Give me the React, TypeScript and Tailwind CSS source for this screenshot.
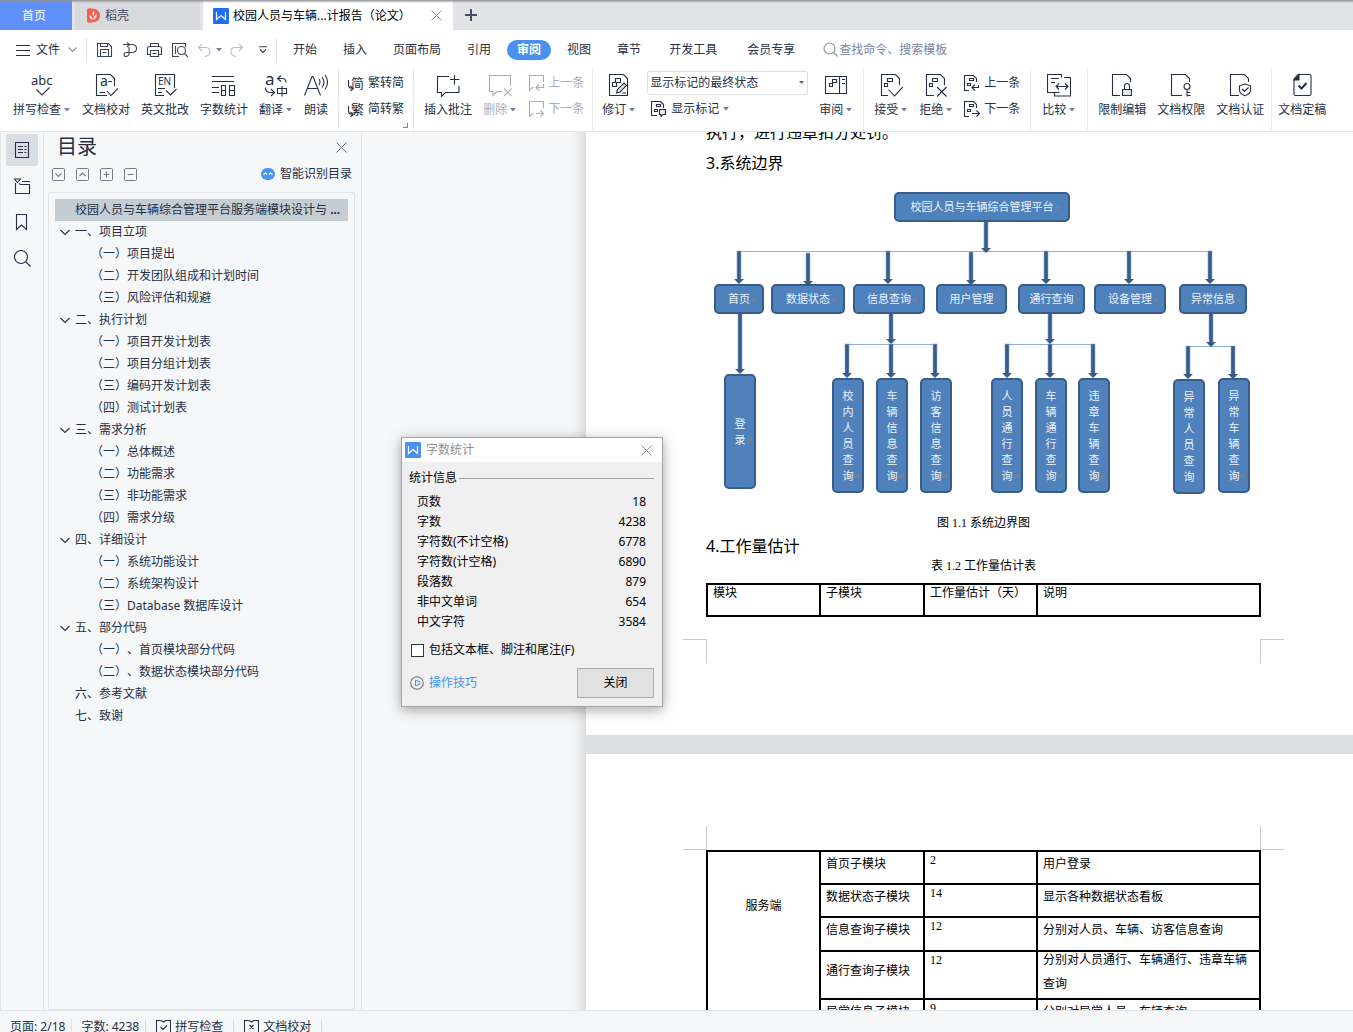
import type { ReactNode } from "react";
import clsx from "clsx";

type IconProps = {
  size?: number;
  box?: number;
  className?: string;
  children: ReactNode;
};

const Icon = ({ size = 24, box = size, className, children }: IconProps) => (
  <svg
    width={size}
    height={size}
    viewBox={`0 0 ${box} ${box}`}
    fill="none"
    stroke="currentColor"
    strokeWidth="1.1"
    className={clsx("shrink-0", className)}
    aria-hidden="true"
  >
    {children}
  </svg>
);

const Glyph = ({ x, y, size, children }: { x: number; y: number; size: number; children: string }) => (
  <text x={x} y={y} fontSize={size} fill="currentColor" stroke="none">
    {children}
  </text>
);

const Caret = () => (
  <svg width="7" height="4" viewBox="0 0 7 4" className="shrink-0" aria-hidden="true">
    <path d="M0 0h6L3 3.5z" fill="#74809b" />
  </svg>
);

const WLogo = ({ className }: { className?: string }) => (
  <svg width="16" height="16" viewBox="0 0 16 16" className={clsx("shrink-0", className)} aria-hidden="true">
    <rect width="16" height="16" rx="1" fill="currentColor" />
    <path d="M3.5 4v7.5L8 7.5l4.5 4V4" fill="none" stroke="#fff" strokeWidth="1.2" />
  </svg>
);

const Close = ({ size = 11 }: { size?: number }) => (
  <Icon size={size} box={11}>
    <path d="M.5.5l10 10M10.5.5l-10 10" strokeWidth="1" />
  </Icon>
);

const icons = {
  spell: (
    <Icon>
      <Glyph x={1} y={12} size={13}>abc</Glyph>
      <path d="M6.5 16.5l5.5 5.5 7.500-7.500" />
    </Icon>
  ),
  proof: (
    <Icon>
      <path d="M13 22.5H2.5v-21h14l4 4V13M5.500 19.5h5.500M13 18l4 4.500 7-7" />
      <Glyph x={6} y={13} size={14}>a-</Glyph>
    </Icon>
  ),
  english: (
    <Icon>
      <path d="M11 22.5H2.5v-21h19V15M5 15.5h7M5 19.5h4M13 17.500l4.500 4.500 6-6" />
      <Glyph x={5} y={12} size={10}>EN</Glyph>
    </Icon>
  ),
  count: (
    <Icon>
      <path d="M0 3.5h22M0 8.5h22M0 14.5h7M0 19.5h7M9.5 12.5h4v10h-4zM9.5 17.5h4M17.5 12.5h5v10h-5zM17.5 17.5h5" />
    </Icon>
  ),
  translate: (
    <Icon>
      <Glyph x={1} y={12} size={17}>a</Glyph>
      <path d="M17 2.500l-3.500 3 3.500 3M14 5.500h4.500q3.500 0 3.500 4M1.500 14.500q0 5 5 5h3.500M7 16l3.500 3.500L7 23M13.5 15.5h9v5h-9zM18 13v10.500" />
    </Icon>
  ),
  read: (
    <Icon>
      <path d="M.5 22.500L8 3.500h1l7.500 19M3.5 15.5h10M15 6q2 3 0 6M18 4q4 5.500 0 10.500M21 2q5 7 0 14.500" />
    </Icon>
  ),
  comment: (
    <Icon>
      <path d="M13 3.5H1.500v16H5.500v4l4-4h13.500V13M14 6.500h9.500M18.5 2v9.500" />
    </Icon>
  ),
  removeComment: (
    <Icon>
      <path d="M14 18.5H9l-4 4v-4H1.500v-16h21V13M16 15.500l7.500 7.500M23.500 15.500L16 23" />
    </Icon>
  ),
  revise: (
    <Icon>
      <path d="M2.5 1.5h14l4 4v17h-18zM6.500 9.500h7v-4H8.500v4M5.500 9.500h4v4h-4z" />
      <path d="M9.500 20l1-3.500 6.500-6.500 2.500 2.500-6.500 6.500z" fill="#e4e6e9" />
      <path d="M15.500 20h3.500" />
    </Icon>
  ),
  reviewPane: (
    <Icon>
      <path d="M1.5 3.5h21v17h-21zM15.5 3.5v17M8.5 6.5h4v3h-4zM5.5 10.5h3v3h-3zM18 6.500h3M18 10.500h3" />
    </Icon>
  ),
  accept: (
    <Icon>
      <path d="M9 22.5H2.5v-21h14l4 4V12M8.5 5.5h5v3h-5zM5.5 10.5h3v3h-3zM9.500 16.500l6 6.500 8.500-9" />
    </Icon>
  ),
  reject: (
    <Icon>
      <path d="M10 22.5H2.5v-21h14l4 4V12M8.5 5.5h5v3h-5zM5.5 10.5h3v3h-3zM13 14l9.500 9.500M22.500 14L13 23.500" />
    </Icon>
  ),
  compare: (
    <Icon>
      <path d="M14.500 4.500v-3H.5v18h12M7.500 19.500v3.500h16V4.500H17M4 5.500h8M4 9.500h4M9 13.500h12M12 10.500l-3 3 3 3M18 10.500l3 3-3 3" />
    </Icon>
  ),
  lock: (
    <Icon>
      <path d="M10 22.5H2.5v-21h14l4 4V9" />
      <path d="M12.5 16.5h9v6h-9z" fill="#e4e6e9" />
      <path d="M14.5 16v-3q0-2.500 2.500-2.500t2.500 2.500v3" />
    </Icon>
  ),
  key: (
    <Icon>
      <path d="M13 22.5H2.5v-21h14l4 4V9M18 17v6.500M18 22.5h3.500M18 19.5h3" />
      <circle cx="18" cy="13.500" r="3" />
    </Icon>
  ),
  shield: (
    <Icon>
      <path d="M11 22.5H2.5v-21h14l4 4V9M17 11l5.500 1.800v4.500q0 3.500-5.500 5.500-5.500-2-5.500-5.500v-4.500zM14 16l2.500 2.500 4-4" />
    </Icon>
  ),
  final: (
    <Icon>
      <path d="M8 1.500h11.500q1.500 0 1.500 1.500v18q0 1.500-1.500 1.500h-14q-1.500 0-1.500-1.500V6z" />
      <path d="M4 7l5-5.500V7z" fill="currentColor" />
      <path d="M8.500 12.500l3 3 5-5.500" strokeWidth="2" />
    </Icon>
  ),
  toSimplified: (
    <Icon size={16}>
      <Glyph x={3} y={13} size={13}>简</Glyph>
      <path d="M.5 5v5q0 3 3 3.500M2.500 11l2.500 2.500L2.500 16" />
    </Icon>
  ),
  toTraditional: (
    <Icon size={16}>
      <Glyph x={3} y={13} size={13}>繁</Glyph>
      <path d="M.5 5v5q0 3 3 3.500M2.500 11l2.500 2.500L2.500 16" />
    </Icon>
  ),
  prevComment: (
    <Icon size={16}>
      <path d="M5.500 12.500H4.500l-3 3V.5h14V7M15.500 9v3.500H8M11 9.500l-3 3 3 3" />
    </Icon>
  ),
  nextComment: (
    <Icon size={16}>
      <path d="M5.500 12.500H4.500l-3 3V.5h14V7M8 12.500h7.500M12.500 9.500l3 3-3 3" />
    </Icon>
  ),
  prevChange: (
    <Icon size={16}>
      <path d="M5 15.500H.500V.5h9l3 3V7M5.500 3.500h4v2h-4zM3.500 8.500h3v2h-3zM8 12.500h6.500V10M11 9.500l-3 3 3 3" />
    </Icon>
  ),
  nextChange: (
    <Icon size={16}>
      <path d="M5 15.500H.500V.5h9l3 3V7M5.500 3.500h4v2h-4zM3.500 8.500h3v2h-3zM8 12.500h7M12.500 9.500l3 3-3 3" />
    </Icon>
  ),
  showMarks: (
    <Icon size={16}>
      <path d="M6 14.500H.500V.5h9l3 3V7M5.500 3.500h4v2h-4zM3.500 8.500h3v2h-3z" />
      <path d="M8.500 8.500h6v5H12l-2 2v-2H8.500z" fill="#e4e6e9" />
    </Icon>
  ),
};

type ButtonProps = {
  icon: ReactNode;
  label: string;
  caret?: boolean;
  disabled?: boolean;
};

const BigButton = ({ icon, label, caret, disabled }: ButtonProps) => (
  <button
    type="button"
    disabled={disabled}
    className="flex shrink-0 flex-col items-center gap-[5px] pt-[5px] disabled:text-[#a9adb5]"
  >
    {icon}
    <span className="flex items-center gap-[3px] whitespace-nowrap">
      {label}
      {caret && <Caret />}
    </span>
  </button>
);

const SmallButton = ({ icon, label, caret, disabled }: ButtonProps) => (
  <button
    type="button"
    disabled={disabled}
    className="flex h-4 items-center gap-1 whitespace-nowrap disabled:text-[#a9adb5]"
  >
    {icon}
    {label}
    {caret && <Caret />}
  </button>
);

const Group = ({ className, children }: { className: string; children: ReactNode }) => (
  <div className={clsx("relative flex h-[62px] shrink-0 items-start gap-[11px] border-[#e9ebee]", className)}>
    {children}
  </div>
);

const Pair = ({ children }: { children: ReactNode }) => (
  <div className="flex flex-col gap-[10px] pt-[7px]">{children}</div>
);

const TabBar = () => (
  <div className="relative flex h-[30px] shrink-0 items-stretch bg-[#e1e3e7]">
    <button type="button" className="w-[72px] bg-[#5f8ff8] pt-[1px] pr-1 text-white">
      首页
    </button>
    <button
      type="button"
      className="ml-[3px] flex w-[125px] items-center gap-[5px] bg-[#d8dade] pt-[1px] pl-3 text-[#3f4a63]"
    >
      <svg width="13" height="15" viewBox="0 0 13 15" aria-hidden="true">
        <path d="M0 2q0-2 2-1.800L8 1q5 1.500 5 6.500T8 14l-6 .800Q0 15 0 13z" fill="#f5604d" />
        <path
          d="M6 13V8M6 12Q2 11 2.500 7 5 8 6 12 10 10 10 6 7 7 6 12M6 8Q4.500 5 6.500 3 8 5 7 7"
          fill="#fff"
          fillOpacity=".8"
        />
      </svg>
      稻壳
    </button>
    <div className="ml-[3px] flex w-[250px] items-center bg-white pt-[1px] pr-[11px] pl-[10px] text-black">
      <WLogo className="text-[#1f6ff0]" />
      <span className="ml-1 whitespace-nowrap">校园人员与车辆...计报告（论文）</span>
      <button type="button" aria-label="关闭标签" className="ml-auto text-[#8290ad]">
        <Close />
      </button>
    </div>
    <button type="button" aria-label="新建" className="ml-3 text-[#44506b]">
      <Icon size={12}>
        <path d="M0 6h12M6 0v12" strokeWidth="2" />
      </Icon>
    </button>
    <div className="absolute inset-x-0 top-0 h-[3px] bg-linear-to-b from-[#8f9092] to-transparent" />
  </div>
);

const mainTabs = ["开始", "插入", "页面布局", "引用", "审阅", "视图", "章节"];
const extraTabs = ["开发工具", "会员专享"];

const QuickTools = () => (
  <div className="flex shrink-0 items-center text-[#3a4256]">
    <button type="button" aria-label="保存">
      <Icon size={16}>
        <path d="M.5 1.500h11l3 3v10h-14zM3.500 1.500v3h7v-3M3.500 14.500v-7h8v7M5.500 10.500h4" />
      </Icon>
    </button>
    <button type="button" aria-label="输出" className="ml-[9px]">
      <Icon size={16}>
        <path d="M1 2.500h6M5 .5l2.500 2L5 5M8 2.500h2q4.500 0 4.500 4t-4.500 4H4.500q-2.500 0-2.500 2t2 2 3-2V5" />
      </Icon>
    </button>
    <button type="button" aria-label="打印" className="ml-[9px]">
      <Icon size={16}>
        <path d="M3.500 4.500v-3h8v3M3 12.500H.5v-6q0-2 2-2h10q2 0 2 2v6H12M3.500 8.500h8v6h-8zM5.500 11.500h4" />
      </Icon>
    </button>
    <button type="button" aria-label="打印预览" className="ml-[9px]">
      <Icon size={16}>
        <path d="M13.500 5V1.500H.5v13H7M3.500 4v8" />
        <circle cx="9.500" cy="8.500" r="4" />
        <path d="M12.500 11.500l3.500 3.500" />
      </Icon>
    </button>
    <button type="button" aria-label="撤销" className="ml-[9px] flex items-center gap-[3px] text-[#b9bec8]">
      <Icon size={16}>
        <path d="M5 2L1.500 5.500 5 9M2 5.500h7q4 0 4 4t-5 5" />
      </Icon>
      <Caret />
    </button>
    <button type="button" aria-label="恢复" className="ml-[6px] text-[#b9bec8]">
      <Icon size={16}>
        <path d="M10 2l3.500 3.500L10 9M13 5.500H6q-4 0-4 4t5 5" />
      </Icon>
    </button>
    <button type="button" aria-label="更多" className="ml-[14px]">
      <Icon size={8}>
        <path d="M0 .8h8M1 3.500l3 3 3-3" />
      </Icon>
    </button>
  </div>
);

const MenuRow = () => (
  <div className="flex h-9 shrink-0 items-center pt-[3px] pl-4">
    <button type="button" className="flex items-center">
      <Icon size={14}>
        <path d="M0 2.500h14M0 7.500h14M0 12.500h14" />
      </Icon>
      <span className="ml-[6px]">文件</span>
      <Icon size={9} className="ml-2 text-[#8b93a3]">
        <path d="M.5 2.500l4 4 4-4" />
      </Icon>
    </button>
    <span className="mr-[10px] ml-[9px] h-6 w-px bg-[#dfe1e5]" />
    <QuickTools />
    <span className="mr-[6px] ml-[9px] h-6 w-px bg-[#dfe1e5]" />
    <nav className="flex shrink-0 items-center gap-[18px] whitespace-nowrap">
      <div className="flex gap-[6px]">
        {mainTabs.map((tab) => (
          <button
            key={tab}
            type="button"
            className={clsx(
              "h-5 rounded-full px-[10px]",
              tab === "审阅" && "bg-[#4a90ee] font-bold text-white"
            )}
          >
            {tab}
          </button>
        ))}
      </div>
      <div className="flex gap-[30px]">
        {extraTabs.map((tab) => (
          <button key={tab} type="button">
            {tab}
          </button>
        ))}
      </div>
    </nav>
    <label className="ml-[28px] flex items-center gap-[1px] text-[#8592ad]">
      <Icon size={15}>
        <circle cx="6.500" cy="6.500" r="5.500" />
        <path d="M10.500 10.500l4 4" />
      </Icon>
      <input
        type="search"
        aria-label="查找命令、搜索模板"
        placeholder="查找命令、搜索模板"
        className="w-40 bg-transparent outline-none placeholder:text-[#7785a3]"
      />
    </label>
  </div>
);

const Ribbon = () => (
  <div className="relative z-10 flex h-[66px] shrink-0 overflow-hidden border-b border-[#e3e5e8] bg-white pt-[2px]">
    <Group className="border-r pr-[10px] pl-[13px]">
      <BigButton icon={icons.spell} label="拼写检查" caret />
      <BigButton icon={icons.proof} label="文档校对" />
      <BigButton icon={icons.english} label="英文批改" />
      <BigButton icon={icons.count} label="字数统计" />
      <BigButton icon={icons.translate} label="翻译" caret />
      <BigButton icon={icons.read} label="朗读" />
    </Group>
    <Group className="border-r px-[9px]">
      <Pair>
        <SmallButton icon={icons.toSimplified} label="繁转简" />
        <SmallButton icon={icons.toTraditional} label="简转繁" />
      </Pair>
      <button
        type="button"
        aria-label="更多选项"
        className="absolute right-[5px] bottom-[2px] size-[5px] border-r border-b border-[#7d879b]"
      />
    </Group>
    <Group className="border-r pr-2 pl-[10px]">
      <BigButton icon={icons.comment} label="插入批注" />
      <BigButton icon={icons.removeComment} label="删除" caret disabled />
      <Pair>
        <SmallButton icon={icons.prevComment} label="上一条" disabled />
        <SmallButton icon={icons.nextComment} label="下一条" disabled />
      </Pair>
    </Group>
    <Group className="border-r pr-[10px] pl-[9px]">
      <BigButton icon={icons.revise} label="修订" caret />
      <div className="flex flex-col gap-[6px] pt-[3px]">
        <div className="relative">
          <select
            aria-label="标记状态"
            className="h-6 w-[161px] appearance-none rounded-[2px] border border-[#dcdfe4] bg-white pl-[2px] outline-none"
          >
            <option>显示标记的最终状态</option>
          </select>
          <span className="pointer-events-none absolute top-[10px] right-1">
            <svg width="5" height="3" viewBox="0 0 5 3" className="block">
              <path d="M0 0h5L2.500 3z" fill="#5b6780" />
            </svg>
          </span>
        </div>
        <div className="flex pl-1">
          <SmallButton icon={icons.showMarks} label="显示标记" caret />
        </div>
      </div>
      <BigButton icon={icons.reviewPane} label="审阅" caret />
    </Group>
    <Group className="border-r px-[10px]">
      <BigButton icon={icons.accept} label="接受" caret />
      <BigButton icon={icons.reject} label="拒绝" caret />
      <Pair>
        <SmallButton icon={icons.prevChange} label="上一条" />
        <SmallButton icon={icons.nextChange} label="下一条" />
      </Pair>
    </Group>
    <Group className="border-r px-[11px]">
      <BigButton icon={icons.compare} label="比较" caret />
    </Group>
    <Group className="border-r pr-[7px] pl-[10px]">
      <BigButton icon={icons.lock} label="限制编辑" />
      <BigButton icon={icons.key} label="文档权限" />
      <BigButton icon={icons.shield} label="文档认证" />
    </Group>
    <Group className="pl-[6px]">
      <BigButton icon={icons.final} label="文档定稿" />
    </Group>
  </div>
);

const railItems = [
  {
    name: "目录",
    icon: <path d="M1.500.5h13v15h-13zM4 4.500h5M10.500 4.500h2M4 7.500h5M10.500 7.500h2M4 10.500h5M10.500 10.500h2" />,
  },
  {
    name: "章节",
    icon: <path d="M.5 1h6l-3 3.500zM1.500 5v10.500h14v-9h-9l-1.500-1M8 3.500h8" />,
  },
  { name: "书签", icon: <path d="M2.500.5h10v15l-5-4.500-5 4.500z" /> },
  {
    name: "查找",
    icon: <path d="M11.500 11.500l5 5M13.500 7a6.500 6.500 0 1 1-13 0 6.500 6.500 0 0 1 13 0z" />,
  },
];

const Rail = () => (
  <div className="flex w-11 shrink-0 flex-col items-center gap-1 border-x border-[#e1e4e9] pt-[2px]">
    {railItems.map((item, i) => (
      <button
        key={item.name}
        type="button"
        aria-label={item.name}
        className={clsx("flex size-8 items-center justify-center rounded-[2px]", i === 0 && "bg-[#d9dde4]")}
      >
        <Icon size={17}>{item.icon}</Icon>
      </button>
    ))}
  </div>
);

const outline = [
  { title: "一、项目立项", children: ["（一）项目提出", "（二）开发团队组成和计划时间", "（三）风险评估和规避"] },
  {
    title: "二、执行计划",
    children: ["（一）项目开发计划表", "（二）项目分组计划表", "（三）编码开发计划表", "（四）测试计划表"],
  },
  {
    title: "三、需求分析",
    children: ["（一）总体概述", "（二）功能需求", "（三）非功能需求", "（四）需求分级"],
  },
  {
    title: "四、详细设计",
    children: ["（一）系统功能设计", "（二）系统架构设计", "（三）Database 数据库设计"],
  },
  { title: "五、部分代码", children: ["（一）、首页模块部分代码", "（二）、数据状态模块部分代码"] },
  { title: "六、参考文献", children: [] },
  { title: "七、致谢", children: [] },
];

const outlineTools = [
  { name: "展开", d: "M3.500 5.500l3 3 3-3" },
  { name: "收起", d: "M3.500 8l3-3 3 3" },
  { name: "增加", d: "M3.500 6.500h6M6.500 3.500v6" },
  { name: "减少", d: "M3.500 6.500h6" },
];

const Outline = () => (
  <aside className="flex w-[318px] shrink-0 flex-col border-r border-[#e1e4e9] pr-[6px] pl-1">
    <div className="flex h-[30px] items-center justify-between pr-2 pl-[9px]">
      <h2 className="text-xl leading-7">目录</h2>
      <button type="button" aria-label="关闭目录" className="text-[#6a7387]">
        <Close />
      </button>
    </div>
    <div className="flex h-6 items-center gap-[11px] pr-[3px] pl-1">
      {outlineTools.map((tool) => (
        <button key={tool.name} type="button" aria-label={tool.name} className="text-[#757b88]">
          <Icon size={13}>
            <rect x=".5" y=".5" width="12" height="12" rx="1" strokeWidth="1" />
            <path d={tool.d} />
          </Icon>
        </button>
      ))}
      <button type="button" className="ml-auto flex items-center gap-[5px]">
        <svg width="14" height="12" viewBox="0 0 14 12" aria-hidden="true">
          <rect width="14" height="12" rx="6" fill="#4a97f2" />
          <path d="M2.500 6.500l2-1.500 1.500 1.500M8 6.500L9.500 5l2 1.500" fill="none" stroke="#fff" strokeWidth="1.300" />
        </svg>
        智能识别目录
      </button>
    </div>
    <div className="mt-[6px] min-h-0 flex-1 overflow-hidden rounded-[2px] border border-[#e0e3e8] px-[6px] py-[6px] leading-[22px] whitespace-nowrap">
      <a href="#top" className="block bg-[#c5cdd4] pl-5">
        校园人员与车辆综合管理平台服务端模块设计与 <b>...</b>
      </a>
      <ul>
        {outline.map((section) => (
          <li key={section.title}>
            <a href="#top" className="flex items-center pl-[5px]">
              <span className="w-[15px]">
                {section.children.length > 0 && (
                  <Icon size={10}>
                    <path d="M.5 3l4.500 4.500L9.500 3" />
                  </Icon>
                )}
              </span>
              {section.title}
            </a>
            {section.children.map((child) => (
              <a key={child} href="#top" className="block pl-9">
                {child}
              </a>
            ))}
          </li>
        ))}
      </ul>
    </div>
  </aside>
);

type Node = { x: number; y: number; w: number; h: number; label: string; vertical?: boolean };

const nodes: Node[] = [
  { x: 189, y: 14, w: 174, h: 28, label: "校园人员与车辆综合管理平台" },
  { x: 9, y: 106, w: 48, h: 28, label: "首页" },
  { x: 66, y: 106, w: 72, h: 28, label: "数据状态" },
  { x: 148, y: 106, w: 70, h: 28, label: "信息查询" },
  { x: 231, y: 106, w: 69, h: 28, label: "用户管理" },
  { x: 313, y: 106, w: 65, h: 28, label: "通行查询" },
  { x: 389, y: 106, w: 70, h: 28, label: "设备管理" },
  { x: 474, y: 106, w: 66, h: 28, label: "异常信息" },
  { x: 19, y: 196, w: 30, h: 113, label: "登录", vertical: true },
  { x: 127, y: 200, w: 30, h: 113, label: "校内人员查询", vertical: true },
  { x: 171, y: 200, w: 30, h: 113, label: "车辆信息查询", vertical: true },
  { x: 215, y: 200, w: 30, h: 113, label: "访客信息查询", vertical: true },
  { x: 286, y: 200, w: 30, h: 113, label: "人员通行查询", vertical: true },
  { x: 330, y: 200, w: 30, h: 113, label: "车辆通行查询", vertical: true },
  { x: 373, y: 200, w: 30, h: 113, label: "违章车辆查询", vertical: true },
  { x: 468, y: 201, w: 30, h: 113, label: "异常人员查询", vertical: true },
  { x: 513, y: 200, w: 30, h: 113, label: "异常车辆查询", vertical: true },
];

// [x, from y, to y]
const arrows = [
  [280, 42, 74],
  [33, 72, 105],
  [102, 74, 107],
  [182, 72, 105],
  [265, 73, 106],
  [340, 72, 105],
  [423, 72, 105],
  [504, 72, 105],
  [34, 134, 195],
  [185, 134, 165],
  [141, 165, 199],
  [185, 165, 199],
  [229, 165, 199],
  [344, 134, 165],
  [301, 165, 199],
  [344, 165, 199],
  [387, 165, 199],
  [505, 134, 168],
  [482, 167, 200],
  [527, 167, 200],
];

// [from x, to x, y]
const rails = [
  [31, 506, 72],
  [139, 231, 165],
  [299, 389, 165],
  [480, 529, 167],
];

const Diagram = () => (
  <svg width="555" height="332" viewBox="0 0 555 332" className="block" fontSize="11" fill="#eaf1f9" textAnchor="middle">
    {rails.map(([x1, x2, y]) => (
      <path key={`${x1}-${y}`} d={`M${x1} ${y + 0.5}H${x2}`} stroke="#8fb0d6" />
    ))}
    {arrows.map(([x, y1, y2]) => (
      <g key={`${x}-${y1}`} fill="#385d8a">
        <rect x={x - 2} y={y1} width="4" height={y2 - y1 - 2} stroke="#8aa5c6" strokeWidth=".6" />
        <path d={`M${x - 5} ${y2 - 5}h10l-5 5z`} />
      </g>
    ))}
    {nodes.map(({ x, y, w, h, label, vertical }) => {
      const chars = vertical ? label.split("") : [label];
      const cx = x + w / 2;
      const first = y + h / 2 + 4 - (chars.length - 1) * 8;
      const endX = cx + (vertical ? 6 : label.length * 5.5 + 1);
      const endY = first + (chars.length - 1) * 16 - 3;
      return (
        <g key={label}>
          <rect x={x} y={y} width={w} height={h} rx="4" fill="#4f81bd" stroke="#385d8a" strokeWidth="2" />
          <text>
            {chars.map((char, i) => (
              <tspan key={i} x={cx} y={first + i * 16}>
                {char}
              </tspan>
            ))}
          </text>
          <path d={`M${endX + 5} ${endY - 3}v3h-4m2 -2l-2 2 2 2`} fill="none" stroke="#8c8578" strokeWidth=".8" />
        </g>
      );
    })}
  </svg>
);

const CropMarks = ({ side }: { side: "top" | "bottom" }) => (
  <div className="-mx-[23px] flex justify-between">
    <span className={clsx("size-6 border-r border-[#c9c9c9]", side === "top" ? "border-b" : "border-t")} />
    <span className={clsx("size-6 border-l border-[#c9c9c9]", side === "top" ? "border-b" : "border-t")} />
  </div>
);

const Num = ({ children }: { children: ReactNode }) => (
  <span className="font-['Liberation_Serif',serif] leading-none">{children}</span>
);

const Columns = () => (
  <colgroup>
    <col className="w-[113px]" />
    <col className="w-[104px]" />
    <col className="w-[113px]" />
    <col />
  </colgroup>
);

const workload = [
  { name: "首页子模块", days: 2, note: "用户登录", row: "h-[33px]" },
  { name: "数据状态子模块", days: 14, note: "显示各种数据状态看板", row: "h-[33px]" },
  { name: "信息查询子模块", days: 12, note: "分别对人员、车辆、访客信息查询", row: "h-[34px]" },
  { name: "通行查询子模块", days: 12, note: "分别对人员通行、车辆通行、违章车辆查询", row: "h-12", tall: true },
  { name: "异常信息子模块", days: 9, note: "分别对异常人员、车辆查询", row: "h-[33px]" },
];

const cell = "border-2 border-black px-[5px] py-0 text-left font-normal";

const Document = () => (
  <main className="min-w-0 flex-1 overflow-hidden pl-[224px] text-black">
    <div className="-mt-[15px] w-[795px] bg-[#dddfe2] shadow-[0_0_16px_rgba(0,0,0,0.22)]">
      <section className="bg-white px-[120px] pb-[72px]">
        <p className="text-base leading-[31px]">执行，进行违章扣分处罚。</p>
        <h3 className="text-base leading-[31px]">3.系统边界</h3>
        <Diagram />
        <p className="h-6 text-center leading-6">
          图<Num> 1.1 </Num>系统边界图
        </p>
        <h3 className="h-[23px] text-base leading-[23px]">4.工作量估计</h3>
        <p className="h-4 text-center leading-4">
          表<Num> 1.2 </Num>工作量估计表
        </p>
        <table className="mt-[9px] mb-[22px] w-full table-fixed border-collapse leading-4">
          <Columns />
          <thead>
            <tr className="h-8 align-top">
              <th className={cell}>模块</th>
              <th className={cell}>子模块</th>
              <th className={clsx(cell, "whitespace-nowrap")}>工作量估计（天）</th>
              <th className={cell}>说明</th>
            </tr>
          </thead>
        </table>
        <CropMarks side="bottom" />
      </section>
      <section className="mt-[19px] bg-white px-[120px] pt-[72px]">
        <CropMarks side="top" />
        <table className="w-full table-fixed border-collapse leading-6">
          <Columns />
          <tbody>
            {workload.map((item, i) => (
              <tr key={item.name} className={clsx("align-top", item.row)}>
                {i === 0 && (
                  <td rowSpan={workload.length} className={clsx(cell, "pt-[42px]")}>
                    <p className="text-center">服务端</p>
                  </td>
                )}
                <td className={clsx(cell, item.tall && "pb-2 align-middle")}>{item.name}</td>
                <td className={cell}>
                  <p className="h-4 leading-4">
                    <Num>{item.days}</Num>
                  </p>
                </td>
                <td className={cell}>
                  <p className={clsx(item.tall && "-my-1")}>{item.note}</p>
                </td>
              </tr>
            ))}
          </tbody>
        </table>
      </section>
    </div>
  </main>
);

const stats = [
  ["页数", 18],
  ["字数", 4238],
  ["字符数(不计空格)", 6778],
  ["字符数(计空格)", 6890],
  ["段落数", 879],
  ["非中文单词", 654],
  ["中文字符", 3584],
];

const CountDialog = () => (
  <div
    role="dialog"
    aria-label="字数统计"
    className="absolute top-[437px] left-[401px] z-20 w-[262px] border border-[#a3a3a3] bg-[#f0f0f0] pb-2 text-black shadow-[0_3px_12px_rgba(0,0,0,0.35)]"
  >
    <div className="flex h-6 items-center bg-white pr-[10px] pl-[3px] text-[#8f8f8f]">
      <WLogo className="text-[#4a90f0]" />
      <span className="ml-[5px]">字数统计</span>
      <button type="button" aria-label="关闭窗口" className="ml-auto">
        <Close />
      </button>
    </div>
    <div className="pt-2 pr-2 pl-[7px]">
      <div className="flex items-center gap-[2px]">
        统计信息
        <span className="h-px flex-1 bg-[#a0a0a0]" />
      </div>
      <dl className="mt-[6px] px-2 leading-5">
        {stats.map(([label, value]) => (
          <div key={label} className="flex justify-between">
            <dt>{label}</dt>
            <dd>{value}</dd>
          </div>
        ))}
      </dl>
      <label className="mt-[10px] flex items-center gap-[5px] pl-[2px]">
        <input type="checkbox" className="size-[13px] appearance-none border border-[#333] bg-white" />
        包括文本框、脚注和尾注(F)
      </label>
      <div className="mt-[10px] flex items-center justify-between">
        <a href="#top" className="flex items-center gap-[5px] pl-[1px] text-[#4a90f0]">
          <Icon size={14}>
            <circle cx="7" cy="7" r="6.300" stroke="#6f7684" />
            <path d="M5.500 4.500v5q4.500-.500 4.500-2.500T5.500 4.500z" />
          </Icon>
          操作技巧
        </a>
        <button type="button" className="h-[30px] w-[77px] border border-[#adadad] bg-[#e1e1e1]">
          关闭
        </button>
      </div>
    </div>
  </div>
);

const StatusBar = () => (
  <footer className="flex h-[22px] shrink-0 items-start overflow-hidden border-t border-[#e1e4e9] pt-2 pl-[10px] whitespace-nowrap">
    <span className="border-r border-[#dcdfe4] pr-[6px]">页面: 2/18</span>
    <span className="border-r border-[#dcdfe4] pr-[6px] pl-[9px]">字数: 4238</span>
    <button type="button" className="flex items-center gap-1 border-r border-[#dcdfe4] px-[10px]">
      <Icon size={15}>
        <path d="M5 .5H.5v13h5l2 1 2-1h5V.5H10M5 .5l2.500 1.500L10 .5M4.500 7l2.500 2.500L11 5.500" />
      </Icon>
      拼写检查
    </button>
    <button type="button" className="flex items-center gap-1 border-r border-[#dcdfe4] px-[10px]">
      <Icon size={15}>
        <path d="M5 .5H.5v13h5l2 1 2-1h5V.5H10M5 .5l2.500 1.500L10 .5M5.500 5l4 4M9.500 5l-4 4" />
      </Icon>
      文档校对
    </button>
  </footer>
);

const App = () => (
  <div
    id="top"
    className="relative flex h-screen flex-col overflow-hidden bg-[#f5f7f9] font-['Noto_Sans','Noto_Sans_CJK_SC',sans-serif] text-[12px] leading-4 text-[#262f45] [text-spacing-trim:space-all]"
  >
    <header className="shrink-0 bg-white">
      <TabBar />
      <MenuRow />
      <Ribbon />
    </header>
    <div className="flex min-h-0 flex-1">
      <Rail />
      <Outline />
      <Document />
    </div>
    <StatusBar />
    <CountDialog />
  </div>
);

export default App;
